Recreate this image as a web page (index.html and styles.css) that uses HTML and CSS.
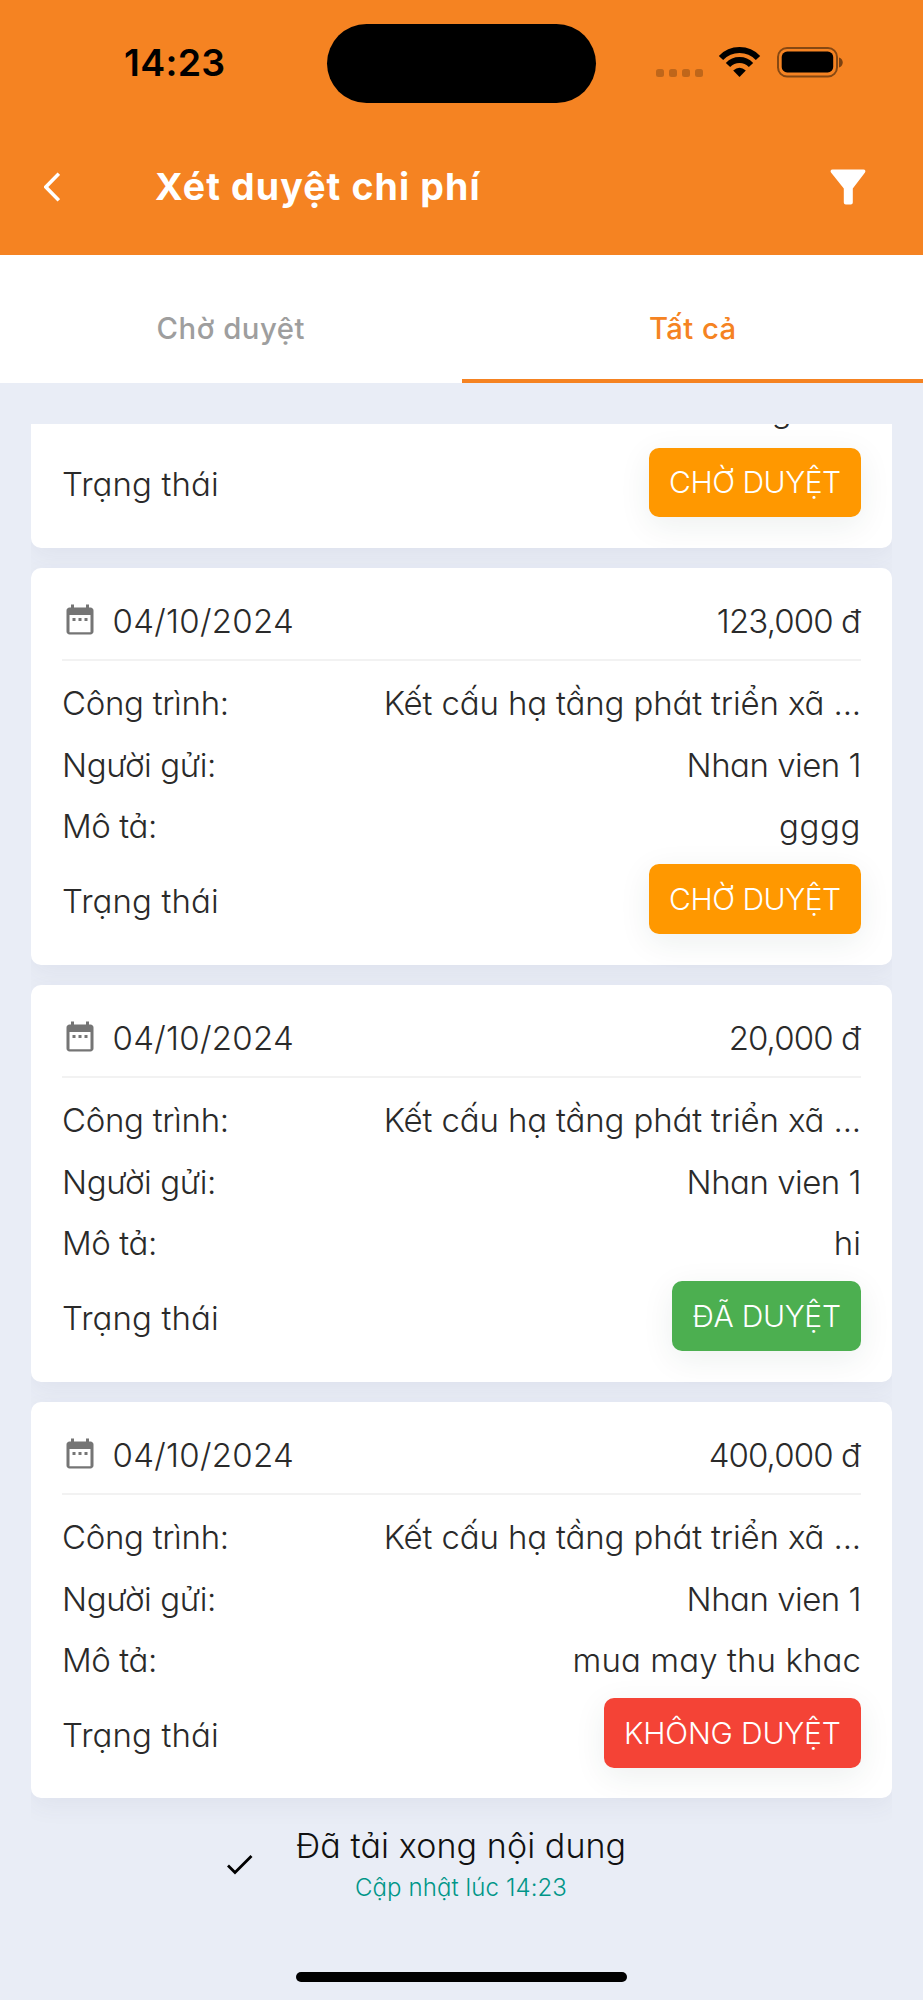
FILE: index.html
```html
<!DOCTYPE html>
<html lang="vi">
<head>
<meta charset="utf-8">
<title>Xét duyệt chi phí</title>
<link rel="stylesheet" href="styles.css">
</head>
<body>
<svg width="0" height="0" class="defs" aria-hidden="true">
  <symbol id="calendar" viewBox="0 0 24 24">
    <path fill="#757575" d="M19 3h-1V1h-2v2H8V1H6v2H5c-1.100 0-2 .9-2 2v14c0 1.100.9 2 2 2h14c1.100 0 2-.9 2-2V5c0-1.100-.9-2-2-2zm0 16.500H5V8h14zM7 10h2v2H7zm4 0h2v2h-2zm4 0h2v2h-2z"/>
  </symbol>
</svg>
<div class="screen">
  <header class="header">
    <div class="status-bar">
      <span class="clock">14:23</span>
      <div class="island"></div>
      <svg class="status-icons" width="188" height="44" viewBox="0 0 188 44">
        <g fill="#000" fill-opacity=".22">
          <rect x="0" y="29" width="8" height="8" rx="2.500"/><rect x="13" y="29" width="8" height="8" rx="2.500"/>
          <rect x="26" y="29" width="8" height="8" rx="2.500"/><rect x="39" y="29" width="8" height="8" rx="2.500"/>
        </g>
        <g fill="none" stroke="#000" stroke-width="6">
          <path d="M65 18 A25.500 25.500 0 0 1 102 18"/>
          <path d="M72 25 A16 16 0 0 1 95 25"/>
        </g>
        <path d="M77.200 30.500 Q83.500 25 89.800 30.500 L83.500 37Z"/>
        <rect x="122" y="8" width="59" height="28.500" rx="9" fill="none" stroke="#000" stroke-opacity=".45" stroke-width="2"/>
        <rect x="125.700" y="11.600" width="51.500" height="20.800" rx="5.500"/>
        <path d="M183 17.500c5 1.500 5 8.500 0 10z" fill-opacity=".5"/>
      </svg>
    </div>
    <div class="nav">
      <svg class="back" width="16" height="30" viewBox="0 0 16 30"><path d="M14.800 1.700 1.800 15l13 13.300" fill="none" stroke="#fff" stroke-width="3.600"/></svg>
      <h1 class="title">Xét duyệt chi phí</h1>
      <svg class="filter" width="36" height="36" viewBox="0 0 36 36"><path fill="#fff" d="M2.500.5h31c1.800 0 2.400 1.800 1.500 3L22.800 19.500V33.500q0 2-2 2h-5q-2 0-2-2V19.500L1 3.500C.1 2.300.7.5 2.500.5z"/></svg>
    </div>
  </header>
  <nav class="tabs">
    <a class="tab tab-pending">Chờ duyệt</a>
    <a class="tab tab-active">Tất cả</a>
  </nav>
  <main class="list">
    <article class="card card-scrolled">
      <div class="row row-scrolled"><span>ghi so</span></div>
      <div class="status"><span class="k4">Trạng thái</span><span class="badge pending">CHỜ DUYỆT</span></div>
    </article>
    <article class="card">
      <div class="card-head"><svg class="cal"><use href="#calendar"/></svg><span class="date">04/10/2024</span><span class="money">123,000 đ</span></div>
      <div class="rows">
        <div class="row"><span class="k1">Công trình:</span><span class="project">Kết cấu hạ tầng phát triển xã ...</span></div>
        <div class="row"><span class="k2">Người gửi:</span><span class="sender">Nhan vien 1</span></div>
        <div class="row"><span class="k3">Mô tả:</span><span class="wide">gggg</span></div>
      </div>
      <div class="status"><span class="k4">Trạng thái</span><span class="badge pending">CHỜ DUYỆT</span></div>
    </article>
    <article class="card">
      <div class="card-head"><svg class="cal"><use href="#calendar"/></svg><span class="date">04/10/2024</span><span class="money">20,000 đ</span></div>
      <div class="rows">
        <div class="row"><span class="k1">Công trình:</span><span class="project">Kết cấu hạ tầng phát triển xã ...</span></div>
        <div class="row"><span class="k2">Người gửi:</span><span class="sender">Nhan vien 1</span></div>
        <div class="row"><span class="k3">Mô tả:</span><span>hi</span></div>
      </div>
      <div class="status"><span class="k4">Trạng thái</span><span class="badge approved">ĐÃ DUYỆT</span></div>
    </article>
    <article class="card">
      <div class="card-head"><svg class="cal"><use href="#calendar"/></svg><span class="date">04/10/2024</span><span class="money">400,000 đ</span></div>
      <div class="rows">
        <div class="row"><span class="k1">Công trình:</span><span class="project">Kết cấu hạ tầng phát triển xã ...</span></div>
        <div class="row"><span class="k2">Người gửi:</span><span class="sender">Nhan vien 1</span></div>
        <div class="row"><span class="k3">Mô tả:</span><span class="note">mua may thu khac</span></div>
      </div>
      <div class="status"><span class="k4">Trạng thái</span><span class="badge rejected">KHÔNG DUYỆT</span></div>
    </article>
    <footer class="footer">
      <div class="loaded">
        <svg width="26" height="22" viewBox="0 0 26 22"><path d="M1 11.500 8 18.500 24.500 2" fill="none" stroke="#000" stroke-width="2.800"/></svg>
        <div class="loaded-text">
          <div class="loaded-title">Đã tải xong nội dung</div>
          <div class="loaded-sub">Cập nhật lúc 14:23</div>
        </div>
      </div>
      <div class="home-bar"></div>
    </footer>
  </main>
</div>
</body>
</html>
```
FILE: styles.css
```css
* { box-sizing: border-box; }
body {
  margin: 0;
  background: #e9edf6;
  color: #2a2a2a;
  font: 300 33px/1 Inter, sans-serif;
  font-feature-settings: "cv11";
}
.defs { display: none; }
.screen { display: flex; flex-direction: column; width: 923px; height: 2000px; overflow: hidden; }

.header { height: 254.700px; background: #f58322; font-feature-settings: normal; }
.status-bar { display: flex; align-items: center; height: 127px; padding: 0 79px 0 124px; }
.clock { width: 203px; margin-top: -2px; color: #000; font-size: 37.500px; font-weight: 600; letter-spacing: .3px; line-height: 48px; }
.island { width: 269px; height: 79px; border-radius: 40px; background: #000; }
.status-icons { margin-left: auto; margin-top: -3px; }
.nav { display: flex; align-items: center; height: 120px; padding: 0 57px 0 44px; }
.title { flex: 1; margin: 0 0 0 95px; color: #fff; font-size: 37.500px; font-weight: 700; letter-spacing: 1.100px; line-height: 50px; }
.back, .filter { flex: none; }

.tabs { display: grid; grid-template-columns: 1fr 1fr; height: 128.300px; background: #fff; font-size: 29.300px; font-weight: 500; font-feature-settings: normal; }
.tab { display: flex; justify-content: center; padding-top: 55px; border-bottom: 4.500px solid transparent; line-height: 37px; }
.tab-pending { color: #9e9e9e; letter-spacing: .5px; }
.tab-active { padding-left: 1px; color: #f58322; border-color: #f58322; letter-spacing: .4px; }

.list { display: flex; flex-direction: column; justify-content: flex-end; gap: 20.300px; height: 1576px; margin: 41px 31px 0; overflow: hidden; }
.card { display: flex; flex-direction: column; flex: none; height: 396.700px; padding: 15px 31px 21px; border-radius: 10px; background: #fff; box-shadow: 0 8px 24px rgba(60, 75, 105, .06); white-space: nowrap; }
.card-scrolled { flex: 1; justify-content: flex-end; height: auto; min-height: 0; padding-top: 0; padding-bottom: 23px; border-radius: 0 0 10px 10px; }
.card-head { display: flex; align-items: center; height: 78px; border-bottom: 2px solid #f2f2f2; line-height: 44px; }
.cal { width: 36px; height: 36px; margin-right: 14.500px; }
.date { letter-spacing: .3px; }
.money { margin-left: auto; padding-right: 1px; letter-spacing: -.9px; }
.rows { padding-top: 11.500px; }
.row { display: flex; justify-content: space-between; flex: none; height: 61.500px; line-height: 62px; }
.row-scrolled { justify-content: flex-end; letter-spacing: -.6px; }
.k1 { letter-spacing: -.3px; }
.k2 { letter-spacing: -.4px; }
.k3 { letter-spacing: -.4px; }
.k4 { padding-top: 3px; letter-spacing: .1px; line-height: 44px; }
.project { letter-spacing: -.13px; }
.sender { letter-spacing: -.5px; }
.wide { letter-spacing: .6px; }
.note { letter-spacing: .1px; }
.status { display: flex; align-items: center; justify-content: space-between; flex: none; height: 84.500px; }
.badge { display: flex; align-items: center; height: 69.500px; padding: 0 20.300px; border-radius: 10px; color: #fff; font-size: 30px; box-shadow: 0 8px 32px rgba(20, 60, 45, .08); }
.pending { background: #ff9800; letter-spacing: -.45px; }
.approved { background: #4caf50; letter-spacing: -.3px; }
.rejected { background: #f44336; letter-spacing: -.17px; }

.footer { display: flex; flex-direction: column; align-items: center; flex: none; height: 201.500px; margin-top: -20.300px; padding: 25.500px 0 17.500px; color: #111; }
.loaded { display: flex; align-items: center; gap: 43px; padding-right: 70px; }
.loaded-text { text-align: center; white-space: nowrap; }
.loaded-title { font-size: 34px; letter-spacing: .1px; line-height: 44px; }
.loaded-sub { padding-top: 2px; color: #009688; font-size: 24px; letter-spacing: .1px; line-height: 36px; }
.home-bar { width: 331px; height: 10.500px; margin-top: auto; border-radius: 6px; background: #000; }
```
